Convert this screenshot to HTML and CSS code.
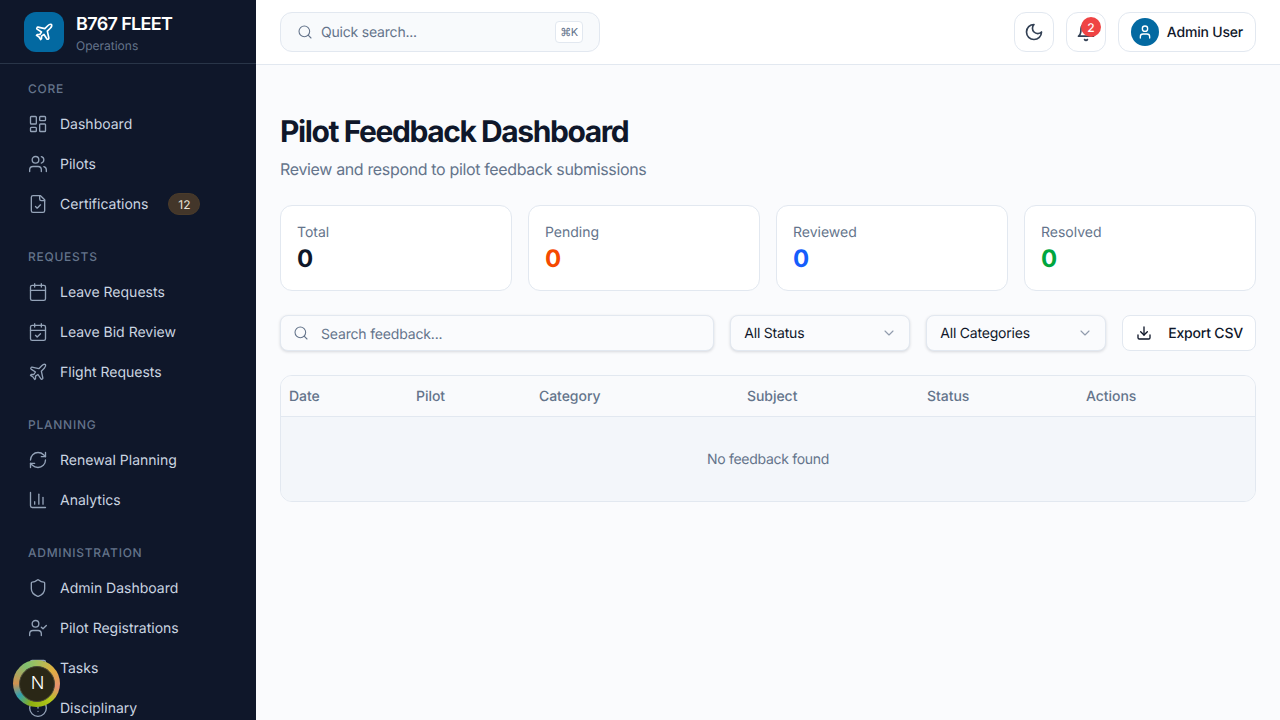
FILE: index.html
```html
<!DOCTYPE html>
<html lang="en">
<head>
    <meta charset="utf-8">
    <title>Pilot Feedback Dashboard</title>
    <link rel="stylesheet" href="styles.css">
</head>
<body>
    <aside class="sidebar">
        <div class="brand">
            <div class="brand-logo">
                <svg class="icon" viewBox="0 0 24 24"><path d="M17.8 19.2 16 11l3.5-3.5C21 6 21.5 4 21 3c-1-.5-3 0-4.5 1.5L13 8 4.8 6.2c-.5-.1-.9.1-1.1.5l-.3.5c-.2.5-.1 1 .3 1.3L9 12l-2 3H4l-1 1 3 2 2 3 1-1v-3l3-2 3.5 5.3c.3.4.8.5 1.3.3l.5-.2c.4-.3.6-.7.5-1.2z"/></svg>
            </div>
            <div class="brand-text">
                <div class="brand-name">B767 FLEET</div>
                <div class="brand-sub">Operations</div>
            </div>
        </div>

        <nav class="nav">
            <div class="nav-section">
                <div class="nav-label">CORE</div>
                <a class="nav-item">
                    <svg class="icon" viewBox="0 0 24 24"><rect x="3" y="3" width="7" height="9" rx="1"/><rect x="14" y="3" width="7" height="5" rx="1"/><rect x="14" y="12" width="7" height="9" rx="1"/><rect x="3" y="16" width="7" height="5" rx="1"/></svg>
                    Dashboard
                </a>
                <a class="nav-item">
                    <svg class="icon" viewBox="0 0 24 24"><path d="M16 21v-2a4 4 0 0 0-4-4H6a4 4 0 0 0-4 4v2"/><circle cx="9" cy="7" r="4"/><path d="M22 21v-2a4 4 0 0 0-3-3.87"/><path d="M16 3.13a4 4 0 0 1 0 7.75"/></svg>
                    Pilots
                </a>
                <a class="nav-item">
                    <svg class="icon" viewBox="0 0 24 24"><path d="M15 2H6a2 2 0 0 0-2 2v16a2 2 0 0 0 2 2h12a2 2 0 0 0 2-2V7Z"/><path d="M14 2v4a2 2 0 0 0 2 2h4"/><path d="m9 15 2 2 4-4"/></svg>
                    Certifications
                    <span class="nav-badge">12</span>
                </a>
            </div>

            <div class="nav-section">
                <div class="nav-label">REQUESTS</div>
                <a class="nav-item">
                    <svg class="icon" viewBox="0 0 24 24"><path d="M8 2v4"/><path d="M16 2v4"/><rect x="3" y="4" width="18" height="18" rx="2"/><path d="M3 10h18"/></svg>
                    Leave Requests
                </a>
                <a class="nav-item">
                    <svg class="icon" viewBox="0 0 24 24"><path d="M8 2v4"/><path d="M16 2v4"/><rect x="3" y="4" width="18" height="18" rx="2"/><path d="M3 10h18"/><path d="m9 16 2 2 4-4"/></svg>
                    Leave Bid Review
                </a>
                <a class="nav-item">
                    <svg class="icon" viewBox="0 0 24 24"><path d="M17.8 19.2 16 11l3.5-3.5C21 6 21.5 4 21 3c-1-.5-3 0-4.5 1.5L13 8 4.8 6.2c-.5-.1-.9.1-1.1.5l-.3.5c-.2.5-.1 1 .3 1.3L9 12l-2 3H4l-1 1 3 2 2 3 1-1v-3l3-2 3.5 5.3c.3.4.8.5 1.3.3l.5-.2c.4-.3.6-.7.5-1.2z"/></svg>
                    Flight Requests
                </a>
            </div>

            <div class="nav-section">
                <div class="nav-label">PLANNING</div>
                <a class="nav-item">
                    <svg class="icon" viewBox="0 0 24 24"><path d="M3 12a9 9 0 0 1 9-9 9.75 9.75 0 0 1 6.74 2.74L21 8"/><path d="M21 3v5h-5"/><path d="M21 12a9 9 0 0 1-9 9 9.75 9.75 0 0 1-6.74-2.74L3 16"/><path d="M8 16H3v5"/></svg>
                    Renewal Planning
                </a>
                <a class="nav-item">
                    <svg class="icon" viewBox="0 0 24 24"><path d="M3 3v16a2 2 0 0 0 2 2h16"/><path d="M18 17V9"/><path d="M13 17V5"/><path d="M8 17v-3"/></svg>
                    Analytics
                </a>
            </div>

            <div class="nav-section">
                <div class="nav-label">ADMINISTRATION</div>
                <a class="nav-item">
                    <svg class="icon" viewBox="0 0 24 24"><path d="M20 13c0 5-3.5 7.5-7.66 8.95a1 1 0 0 1-.67-.01C7.5 20.5 4 18 4 13V6a1 1 0 0 1 1-1c2 0 4.5-1.2 6.24-2.72a1.17 1.17 0 0 1 1.52 0C14.51 3.81 17 5 19 5a1 1 0 0 1 1 1z"/></svg>
                    Admin Dashboard
                </a>
                <a class="nav-item">
                    <svg class="icon" viewBox="0 0 24 24"><path d="M16 21v-2a4 4 0 0 0-4-4H6a4 4 0 0 0-4 4v2"/><circle cx="9" cy="7" r="4"/><path d="m16 11 2 2 4-4"/></svg>
                    Pilot Registrations
                </a>
                <a class="nav-item">
                    <svg class="icon" viewBox="0 0 24 24"><rect x="3" y="3" width="18" height="18" rx="2"/><path d="m9 12 2 2 4-4"/></svg>
                    Tasks
                </a>
                <a class="nav-item">
                    <svg class="icon" viewBox="0 0 24 24"><circle cx="12" cy="12" r="10"/><path d="M12 8v4"/><path d="M12 16h.01"/></svg>
                    Disciplinary
                </a>
            </div>
        </nav>
    </aside>

    <div class="main">
        <header class="topbar">
            <div class="quick-search">
                <svg class="icon" viewBox="0 0 24 24"><circle cx="11" cy="11" r="8"/><path d="m21 21-4.3-4.3"/></svg>
                <span class="quick-text">Quick search...</span>
                <kbd class="kbd">⌘K</kbd>
            </div>
            <div class="topbar-actions">
                <button class="icon-btn">
                    <svg class="icon" viewBox="0 0 24 24"><path d="M12 3a6 6 0 0 0 9 9 9 9 0 1 1-9-9Z"/></svg>
                </button>
                <button class="icon-btn">
                    <svg class="icon" viewBox="0 0 24 24"><path d="M6 8a6 6 0 0 1 12 0c0 7 3 9 3 9H3s3-2 3-9"/><path d="M10.3 21a1.94 1.94 0 0 0 3.4 0"/></svg>
                    <span class="notif-count">2</span>
                </button>
                <button class="user-btn">
                    <span class="avatar">
                        <svg class="icon" viewBox="0 0 24 24"><path d="M19 21v-2a4 4 0 0 0-4-4H9a4 4 0 0 0-4 4v2"/><circle cx="12" cy="7" r="4"/></svg>
                    </span>
                    Admin User
                </button>
            </div>
        </header>

        <main class="content">
            <h1 class="page-title">Pilot Feedback Dashboard</h1>
            <p class="page-sub">Review and respond to pilot feedback submissions</p>

            <div class="stats">
                <div class="stat-card">
                    <div class="stat-label">Total</div>
                    <div class="stat-value">0</div>
                </div>
                <div class="stat-card">
                    <div class="stat-label">Pending</div>
                    <div class="stat-value pending">0</div>
                </div>
                <div class="stat-card">
                    <div class="stat-label">Reviewed</div>
                    <div class="stat-value reviewed">0</div>
                </div>
                <div class="stat-card">
                    <div class="stat-label">Resolved</div>
                    <div class="stat-value resolved">0</div>
                </div>
            </div>

            <div class="filters">
                <label class="filter-search">
                    <svg class="icon" viewBox="0 0 24 24"><circle cx="11" cy="11" r="8"/><path d="m21 21-4.3-4.3"/></svg>
                    <input type="text" placeholder="Search feedback...">
                </label>
                <button class="filter-select">
                    All Status
                    <svg class="icon" viewBox="0 0 24 24"><path d="m6 9 6 6 6-6"/></svg>
                </button>
                <button class="filter-select">
                    All Categories
                    <svg class="icon" viewBox="0 0 24 24"><path d="m6 9 6 6 6-6"/></svg>
                </button>
                <button class="export-btn">
                    <svg class="icon" viewBox="0 0 24 24"><path d="M21 15v4a2 2 0 0 1-2 2H5a2 2 0 0 1-2-2v-4"/><path d="m7 10 5 5 5-5"/><path d="M12 15V3"/></svg>
                    Export CSV
                </button>
            </div>

            <div class="table-wrap">
                <table class="feedback-table">
                    <thead>
                        <tr>
                            <th class="col-date">Date</th>
                            <th class="col-pilot">Pilot</th>
                            <th class="col-category">Category</th>
                            <th class="col-subject">Subject</th>
                            <th class="col-status">Status</th>
                            <th>Actions</th>
                        </tr>
                    </thead>
                    <tbody>
                        <tr>
                            <td colspan="6">No feedback found</td>
                        </tr>
                    </tbody>
                </table>
            </div>
        </main>
    </div>

    <div class="dev-indicator">
        <div class="dev-inner">N</div>
    </div>
</body>
</html>
```

FILE: styles.css
```css
* {
    box-sizing: border-box;
}

html, body {
    height: 100%;
}

body {
    margin: 0;
    display: flex;
    height: 720px;
    overflow: hidden;
    font-family: Inter, "Liberation Sans", sans-serif;
    text-rendering: geometricPrecision;
    background-color: #fafbfd;
    color: #0f172a;
}

button {
    font-family: inherit;
    text-rendering: inherit;
    cursor: pointer;
}

.icon {
    width: 20px;
    height: 20px;
    flex-shrink: 0;
    fill: none;
    stroke: currentColor;
    stroke-width: 2;
    stroke-linecap: round;
    stroke-linejoin: round;
}

/* sidebar */
.sidebar {
    width: 256px;
    flex-shrink: 0;
    height: 720px;
    overflow: hidden;
    background-color: #0f172a;
}

.brand {
    height: 64px;
    display: flex;
    align-items: center;
    gap: 12px;
    padding: 0 24px;
    border-bottom: 1px solid #293548;
}

.brand-logo {
    width: 40px;
    height: 40px;
    display: flex;
    align-items: center;
    justify-content: center;
    border-radius: 12px;
    background-color: #0369a1;
    color: white;
}

.brand-text {
    padding-top: 6px;
}

.brand-name {
    font-size: 18px;
    line-height: 20px;
    font-weight: 600;
    letter-spacing: -0.65px;
    color: white;
}

.brand-sub {
    margin-top: 3px;
    font-size: 12px;
    line-height: 16px;
    color: #64748b;
}

.nav {
    padding: 17px 16px 0;
}

.nav-section {
    margin-bottom: 25px;
}

.nav-label {
    padding: 0 12px;
    margin-bottom: 7px;
    font-size: 12px;
    line-height: 16px;
    font-weight: 500;
    letter-spacing: 0.75px;
    color: #64748b;
}

.nav-item {
    height: 40px;
    display: flex;
    align-items: center;
    gap: 12px;
    padding: 0 12px;
    font-size: 14px;
    font-weight: 400;
    color: #cbd5e1;
}

.nav-item .icon {
    color: #94a3b8;
    stroke-width: 1.6;
}

.nav-badge {
    margin-left: 8px;
    width: 32px;
    height: 22px;
    display: flex;
    align-items: center;
    justify-content: center;
    border-radius: 11px;
    background-color: #43362a;
    border: 1px solid #4a3b2a;
    font-size: 12px;
    color: #e7e2d8;
}

/* top bar */
.main {
    flex: 1;
    min-width: 0;
}

.topbar {
    height: 65px;
    display: flex;
    align-items: center;
    justify-content: space-between;
    padding: 0 24px;
    background-color: white;
    border-bottom: 1px solid #e2e8f0;
}

.quick-search {
    width: 320px;
    height: 40px;
    display: flex;
    align-items: center;
    gap: 8px;
    padding: 0 16px;
    border: 1px solid #e2e8f0;
    border-radius: 12px;
    background-color: #f8fafc;
    color: #64748b;
}

.quick-search .icon {
    width: 16px;
    height: 16px;
    stroke-width: 1.6;
}

.quick-text {
    flex: 1;
    font-size: 14px;
    letter-spacing: -0.2px;
}

.kbd {
    width: 28px;
    height: 22px;
    display: flex;
    align-items: center;
    justify-content: center;
    border: 1px solid #e2e8f0;
    border-radius: 4px;
    background-color: white;
    font-family: Inter, "DejaVu Sans", sans-serif;
    font-size: 11px;
    letter-spacing: -0.5px;
    color: #64748b;
}

.topbar-actions {
    display: flex;
    align-items: center;
    gap: 12px;
}

.icon-btn {
    position: relative;
    width: 40px;
    height: 40px;
    display: flex;
    align-items: center;
    justify-content: center;
    padding: 0;
    border: 1px solid #e2e8f0;
    border-radius: 12px;
    background-color: white;
    color: #334155;
}

.notif-count {
    position: absolute;
    top: 4px;
    right: 4px;
    width: 20px;
    height: 20px;
    display: flex;
    align-items: center;
    justify-content: center;
    border-radius: 50%;
    background-color: #ef4444;
    color: white;
    font-size: 12px;
    font-weight: 500;
}

.user-btn {
    height: 40px;
    display: flex;
    align-items: center;
    gap: 8px;
    padding: 0 12px;
    border: 1px solid #e2e8f0;
    border-radius: 12px;
    background-color: white;
    color: #0f172a;
    font-size: 14px;
    font-weight: 500;
    letter-spacing: -0.2px;
}

.avatar {
    width: 28px;
    height: 28px;
    display: flex;
    align-items: center;
    justify-content: center;
    border-radius: 50%;
    background-color: #0369a1;
    color: white;
}

.avatar .icon {
    width: 16px;
    height: 16px;
}

/* page */
.content {
    padding: 48px 24px 24px;
}

.page-title {
    margin: 0;
    font-size: 30px;
    line-height: 38px;
    font-weight: 700;
    letter-spacing: -1.42px;
    color: #0f172a;
}

.page-sub {
    margin: 6px 0 0;
    font-size: 16px;
    line-height: 24px;
    letter-spacing: -0.35px;
    color: #64748b;
}

.stats {
    margin-top: 24px;
    display: grid;
    grid-template-columns: repeat(4, 1fr);
    gap: 16px;
}

.stat-card {
    height: 86px;
    padding: 17px 16px 16px;
    background-color: white;
    border: 1px solid #e2e8f0;
    border-radius: 12px;
}

.stat-label {
    font-size: 14px;
    line-height: 20px;
    color: #64748b;
}

.stat-value {
    font-size: 24px;
    line-height: 32px;
    font-weight: 700;
    color: #0f172a;
}

.stat-value.pending {
    color: #f54900;
}

.stat-value.reviewed {
    color: #155dfc;
}

.stat-value.resolved {
    color: #00a63e;
}

.filters {
    margin-top: 24px;
    display: flex;
    gap: 16px;
}

.filter-search {
    flex: 1;
    height: 36px;
    display: flex;
    align-items: center;
    gap: 12px;
    padding: 0 12px;
    border: 1px solid #e2e8f0;
    border-radius: 8px;
    background-color: #fafbfd;
    box-shadow: 0 1px 3px rgba(15, 23, 42, 0.15);
    color: #64748b;
}

.filter-search .icon {
    width: 16px;
    height: 16px;
    stroke-width: 1.6;
}

.filter-search input {
    flex: 1;
    min-width: 0;
    padding: 2px 0 0;
    border: none;
    outline: none;
    background: none;
    font-family: inherit;
    text-rendering: inherit;
    font-size: 14px;
    letter-spacing: -0.17px;
    color: #0f172a;
}

.filter-search input::placeholder {
    color: #64748b;
    opacity: 1;
}

.filter-select {
    width: 180px;
    height: 36px;
    display: flex;
    align-items: center;
    justify-content: space-between;
    padding: 0 12px 0 13px;
    border: 1px solid #e2e8f0;
    border-radius: 8px;
    background-color: #fafbfd;
    box-shadow: 0 1px 3px rgba(15, 23, 42, 0.15);
    color: #0f172a;
    font-size: 14px;
    letter-spacing: -0.2px;
}

.filter-select .icon {
    width: 16px;
    height: 16px;
    color: #64748b;
    opacity: 0.7;
    stroke-width: 1.6;
}

.export-btn {
    height: 36px;
    display: flex;
    align-items: center;
    gap: 16px;
    padding: 0 12px 0 13px;
    border: 1px solid #e2e8f0;
    border-radius: 8px;
    background-color: white;
    color: #0f172a;
    font-size: 14px;
    font-weight: 500;
    letter-spacing: -0.2px;
}

.export-btn .icon {
    width: 16px;
    height: 16px;
}

.table-wrap {
    margin-top: 24px;
    overflow: hidden;
    border: 1px solid #e2e8f0;
    border-radius: 12px;
}

.feedback-table {
    width: 100%;
    table-layout: fixed;
    border-collapse: collapse;
    font-size: 14px;
}

.feedback-table th {
    height: 40px;
    padding: 2px 8px 0;
    text-align: left;
    font-weight: 500;
    letter-spacing: -0.05px;
    color: #64748b;
    background-color: #f9fafc;
    border-bottom: 1px solid #e2e8f0;
}

.col-date {
    width: 127px;
}

.col-pilot {
    width: 123px;
}

.col-category {
    width: 208px;
}

.col-subject {
    width: 180px;
}

.col-status {
    width: 159px;
}

.feedback-table td {
    height: 85px;
    padding-top: 3px;
    text-align: center;
    letter-spacing: -0.3px;
    color: #64748b;
    background-color: #f3f6fa;
}

/* dev tools badge, sits over the sidebar */
.dev-indicator {
    position: absolute;
    left: 13px;
    top: 660px;
    width: 47px;
    height: 47px;
    display: flex;
    align-items: center;
    justify-content: center;
    border-radius: 50%;
    background: conic-gradient(#9fc060 0deg, #e0b040 50deg, #e89070 100deg, #b4c81a 140deg, #8fb010 195deg, #30a0b0 235deg, #d09050 270deg, #80c070 330deg, #9fc060 360deg);
}

.dev-inner {
    width: 36px;
    height: 36px;
    padding-left: 2px;
    display: flex;
    align-items: center;
    justify-content: center;
    border-radius: 50%;
    background-color: #2a2716;
    border: 1px solid #4a4838;
    color: white;
    font-size: 18px;
    font-weight: 300;
}
```
